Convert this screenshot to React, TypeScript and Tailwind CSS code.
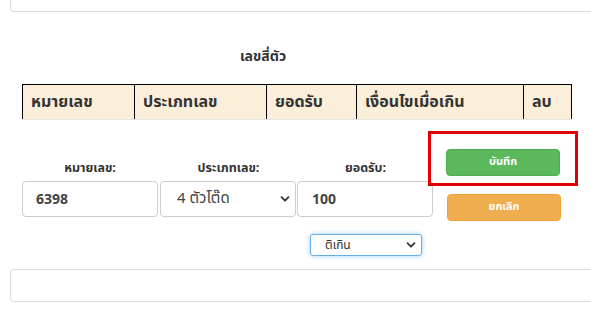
import React from "react";

function Chevron() {
  return (
    <svg width="10" height="10" viewBox="0 0 10 10" className="shrink-0">
      <path d="M1.5 3.2 L5 6.7 L8.5 3.2" fill="none" stroke="#333" strokeWidth="1.8" strokeLinecap="round" strokeLinejoin="round" />
    </svg>
  );
}

export default function App() {
  const font = { fontFamily: "Tahoma, 'Noto Sans Thai', 'Noto Sans', 'DejaVu Sans', sans-serif" };
  return (
    <div className="w-[591px] h-[324px] bg-white overflow-hidden relative text-[#333]" style={font}>
      <div className="ml-[10px] h-[12px] border-l border-b border-[#dddddd] rounded-bl-[4px]" />

      <div className="pl-[22px] w-[571px]">
        <div className="mt-[37px] w-[482px] text-center text-[14px] font-bold leading-[16px] h-[16px]">เลขสี่ตัว</div>

        <div className="mt-[19px] flex h-[35px] w-[550px] bg-[#fcefda] border-t border-l border-r border-black border-b-0 text-[16px] font-bold leading-[35px]">
          <div className="w-[112px] border-r border-black pl-[8px]">หมายเลข</div>
          <div className="w-[132px] border-r border-black pl-[8px]">ประเภทเลข</div>
          <div className="w-[90px] border-r border-black pl-[8px]">ยอดรับ</div>
          <div className="w-[167px] border-r border-black pl-[8px]">เงื่อนไขเมื่อเกิน</div>
          <div className="flex-1 pl-[8px]">ลบ</div>
        </div>
        <div className="h-px w-[550px] bg-[#e5e5e5]" />

        <div className="flex mt-[11px]">
          <div className="flex flex-col">
            <div className="flex pt-[31px]">
              <div className="flex flex-col w-[138px]">
                <div className="text-center text-[12.5px] font-bold leading-[14px] h-[14px] pr-[2px]">หมายเลข:</div>
                <div className="mt-[5px] w-[136px] h-[36px] border border-[#cccccc] rounded-[4px] flex items-center pl-[13px] text-[14px] font-bold text-[#444]">6398</div>
              </div>
              <div className="flex flex-col w-[137px]">
                <div className="text-center text-[12.5px] font-bold leading-[14px] h-[14px]">ประเภทเลข:</div>
                <div className="mt-[5px] w-[136px] h-[36px] border border-[#cccccc] rounded-[4px] flex items-center justify-between pl-[16px] pr-[5px] text-[15px] text-[#444]">
                  <span>4 ตัวโต๊ด</span>
                  <Chevron />
                </div>
              </div>
              <div className="flex flex-col w-[137px]">
                <div className="text-center text-[12.5px] font-bold leading-[14px] h-[14px]">ยอดรับ:</div>
                <div className="mt-[5px] w-[136px] h-[36px] border border-[#cccccc] rounded-[4px] flex items-center pl-[14px] text-[14px] font-bold text-[#444]">100</div>
              </div>
            </div>
            <div className="ml-[288px] mt-[17px] w-[112px] h-[22px] border border-[#66afe9] rounded-[3px] shadow-[0_0_5px_rgba(102,175,233,0.6)] flex items-center justify-between pl-[14px] pr-[5px] text-[12px]">
              <span>ติเกิน</span>
              <Chevron />
            </div>
          </div>

          <div className="ml-[-6px] flex flex-col">
            <div className="border-[3px] border-[#e00000] w-[150px] h-[55px] flex items-start justify-center pt-[15px]">
              <button className="w-[114px] h-[27px] rounded-[4px] bg-[#5cb85c] border border-[#4cae4c] text-white text-[11px] font-bold">บันทึก</button>
            </div>
            <button className="ml-[19px] mt-[8px] w-[114px] h-[27px] rounded-[4px] bg-[#f0ad4e] border border-[#eea236] text-white text-[11px] font-bold">ยกเลิก</button>
          </div>
        </div>
      </div>

      <div className="ml-[10px] mt-[13px] h-[33px] border-l border-t border-b border-[#dddddd] rounded-l-[4px]" />
    </div>
  );
}
